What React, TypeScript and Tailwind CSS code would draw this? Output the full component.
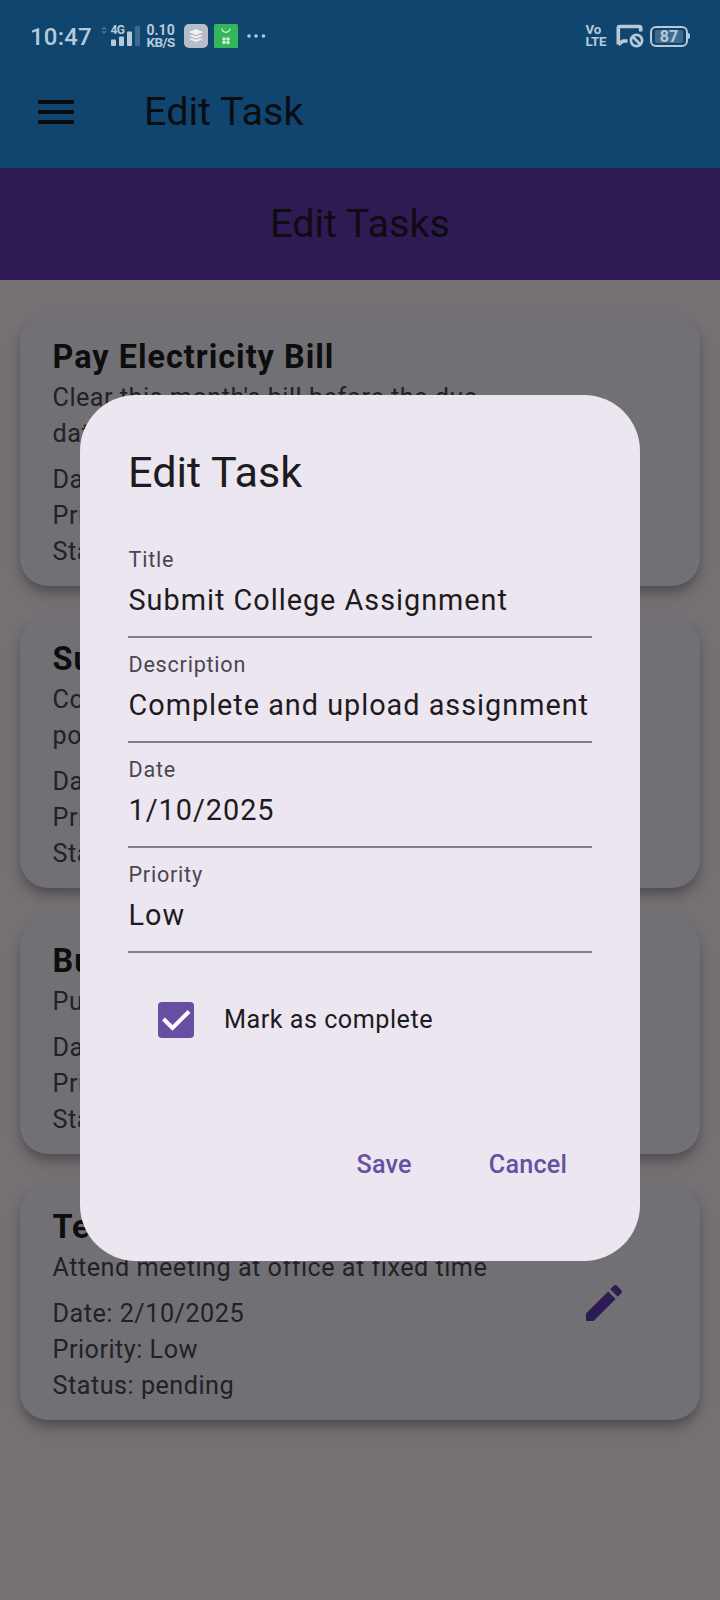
import type { ReactNode } from "react";

type Task = { title: string; description: string[]; date: string; priority: string; status: string };

const tasks: Task[] = [
  { title: "Pay Electricity Bill", description: ["Clear this month's bill before the due", "date"], date: "1/10/2025", priority: "High", status: "pending" },
  { title: "Submit College Assignment", description: ["Complete and upload assignment on", "portal"], date: "1/10/2025", priority: "Low", status: "pending" },
  { title: "Buy Groceries", description: ["Purchase vegetables and fruits"], date: "1/10/2025", priority: "Low", status: "pending" },
  { title: "Team Meeting", description: ["Attend meeting at office at fixed time"], date: "2/10/2025", priority: "Low", status: "pending" },
];

function StatusBar() {
  return (
    <div className="flex h-[72px] items-center pl-[30px] pr-[30px] text-[#b7cad9]">
      <span className="w-[70px] pt-px text-[24px] leading-[24px] font-medium tracking-[0.200px]">10:47</span>
      <svg width="40" height="24" viewBox="0 0 40 24" className="shrink-0">
        <path d="M1 5.500 4 2l3 3.500zM1 7l3 3.500L7 7z" fill="#406a8c" />
        <text x="10.500" y="10" fontSize="12" fontWeight="700" fill="currentColor" letterSpacing="-0.7">4G</text>
        <rect x="11" y="15.500" width="5" height="6.500" rx="1" fill="currentColor" />
        <rect x="19" y="12.500" width="5" height="9.500" rx="1" fill="currentColor" />
        <rect x="27" y="7.500" width="5" height="14.500" rx="1" fill="currentColor" />
        <rect x="35" y="2" width="5" height="20" rx="1" fill="#406a8c" />
      </svg>
      <div className="ml-[6.500px] flex w-[28.500px] flex-col text-[13.500px] leading-[12px] font-bold">
        <span className="text-[14px]">0.10</span>
        <span className="tracking-[-0.600px]">KB/S</span>
      </div>
      <svg width="24" height="24" viewBox="0 0 24 24" className="ml-[9px] shrink-0">
        <rect width="24" height="24" rx="5" fill="#b8bcc9" />
        <path d="M5 8l7-3 7 3-7 3zM5 11.500l3-.8 4 1.600 4-1.600 3 .8-7 3zM5 15l3-.8 4 1.600 4-1.600 3 .8-7 3z" fill="#eef0f3" />
      </svg>
      <svg width="24" height="24" viewBox="0 0 24 24" className="ml-[6px] shrink-0">
        <rect width="24" height="24" rx="1.500" fill="#34b65a" />
        <path d="M8 4.500c.5 5 7.500 5 8 0" fill="none" stroke="#d3ecd9" strokeWidth="1.300" />
        <g fill="#d3ecd9">
          <circle cx="10" cy="15" r="1.800" />
          <circle cx="14" cy="15" r="1.800" />
          <circle cx="10" cy="18.500" r="1.800" />
          <circle cx="14" cy="18.500" r="1.800" />
        </g>
      </svg>
      <svg width="20" height="6" viewBox="0 0 20 6" className="ml-[8px] shrink-0" fill="currentColor">
        <circle cx="3" cy="3" r="1.800" />
        <circle cx="10" cy="3" r="1.800" />
        <circle cx="17.500" cy="3" r="1.800" />
      </svg>
      <div className="ml-auto flex w-[22.500px] flex-col text-[13.300px] leading-[12px] font-bold tracking-[-0.200px]">
        <span>Vo</span>
        <span>LTE</span>
      </div>
      <svg width="28" height="24" viewBox="0 0 28 24" className="ml-[8px] shrink-0" fill="none" stroke="currentColor">
        <path d="M2.300 20.500V4q0-1.500 1.500-1.500h19.400q1.500 0 1.500 1.500V7.500M11.500 17H7L2.300 20.500" strokeWidth="3.600" />
        <circle cx="20.500" cy="16.500" r="5.600" strokeWidth="2.700" />
        <path d="M16.500 12.500l8 8" strokeWidth="2.700" />
      </svg>
      <div className="ml-[6px] flex items-center">
        <div className="flex h-[21px] w-[38px] items-center justify-center rounded-[6px] border-2 border-[#b7cad9]">
          <span className="flex h-[13px] w-[28px] items-center justify-center rounded-[2px] bg-[#406a8c] text-[16px] leading-[15px] font-bold">87</span>
        </div>
        <div className="h-[6px] w-[2px] rounded-r-full bg-[#b7cad9]" />
      </div>
    </div>
  );
}

function TaskCard({ task }: { task: Task }) {
  return (
    <article className="mb-[31px] flex items-center rounded-[28px] bg-[#717074] pt-[19px] pr-[72px] pb-[16px] pl-[32.500px] shadow-[0_8px_20px_rgba(0,0,0,0.16),0_7px_10px_-2px_rgba(0,0,0,0.22)]">
      <div className="flex-1 text-[25.200px] leading-[36px] tracking-[0.500px] whitespace-nowrap text-[#222126]">
        <h2 className="text-[32.400px] leading-[46px] font-bold tracking-[1px] text-[#0d0d0e]">{task.title}</h2>
        {task.description.map((line) => (
          <p key={line}>{line}</p>
        ))}
        <p className="mt-[10px]">Date: {task.date}</p>
        <p>Priority: {task.priority}</p>
        <p>Status: {task.status}</p>
      </div>
      <svg width="48" height="48" viewBox="0 0 24 24" fill="#2f1b54" className="mb-[3px] shrink-0">
        <path d="M3 17.250V21h3.750L17.810 9.940l-3.750-3.750L3 17.250zM20.710 7.040a1 1 0 0 0 0-1.410l-2.340-2.340a1 1 0 0 0-1.410 0l-1.830 1.830 3.750 3.750 1.830-1.830z" />
      </svg>
    </article>
  );
}

function Field({ label, children }: { label: string; children: ReactNode }) {
  return (
    <div className="mb-[14px] h-[91px] border-b-2 border-[#857e8a] pl-[0.500px] whitespace-nowrap">
      <div className="h-[33px] text-[21.600px] leading-[26px] tracking-[0.750px] text-[#4b4650]">{label}</div>
      <div className="text-[28.800px] leading-[40px] tracking-[1px] text-[#1d1b20]">{children}</div>
    </div>
  );
}

export default function App() {
  return (
    <div className="relative h-[1600px] w-[720px] overflow-hidden bg-[#767175] font-['Roboto',sans-serif]">
      <header className="h-[168px] bg-[#10456f]">
        <StatusBar />
        <div className="flex h-[80px] items-center pl-[38px]">
          <div className="flex w-[36px] flex-col gap-[6px]">
            <span className="h-[4px] bg-[#0b0e11]" />
            <span className="h-[4px] bg-[#0b0e11]" />
            <span className="h-[4px] bg-[#0b0e11]" />
          </div>
          <h1 className="ml-[70px] text-[39.600px] leading-[52px] text-[#0b0e11]">Edit Task</h1>
        </div>
      </header>
      <div className="flex h-[112px] items-center justify-center bg-[#2f1b54] text-[39.600px] text-[#0e0b13]">Edit Tasks</div>
      <main className="flex flex-col px-[20px] pt-[35px]">
        {tasks.map((task) => (
          <TaskCard key={task.title} task={task} />
        ))}
      </main>

      <section role="dialog" className="absolute top-[395px] left-[80px] flex h-[865.500px] w-[560px] flex-col rounded-[56px] bg-[#ece6f0] px-[48px] pt-[48px]">
        <h2 className="mb-[44px] text-[43.200px] leading-[60px] text-[#1d1b20]">Edit Task</h2>
        <Field label="Title">Submit College Assignment</Field>
        <Field label="Description">Complete and upload assignment</Field>
        <Field label="Date">1/10/2025</Field>
        <Field label="Priority">Low</Field>
        <label className="mt-[35px] flex h-[36px] items-center pl-[30px]">
          <svg width="36" height="36" viewBox="0 0 36 36">
            <rect width="36" height="36" rx="4" fill="#6750a4" />
            <path d="M5.500 17 14.500 26 31 9.500" fill="none" stroke="#fff" strokeWidth="4" />
          </svg>
          <span className="ml-[30px] text-[25.200px] leading-[36px] tracking-[0.500px] text-[#1d1b20]">Mark as complete</span>
        </label>
        <div className="mt-[109px] flex gap-[77px] pl-[228.500px] text-[25.200px] leading-[36px] font-medium tracking-[0.200px] text-[#6750a4]">
          <button>Save</button>
          <button>Cancel</button>
        </div>
      </section>
    </div>
  );
}
